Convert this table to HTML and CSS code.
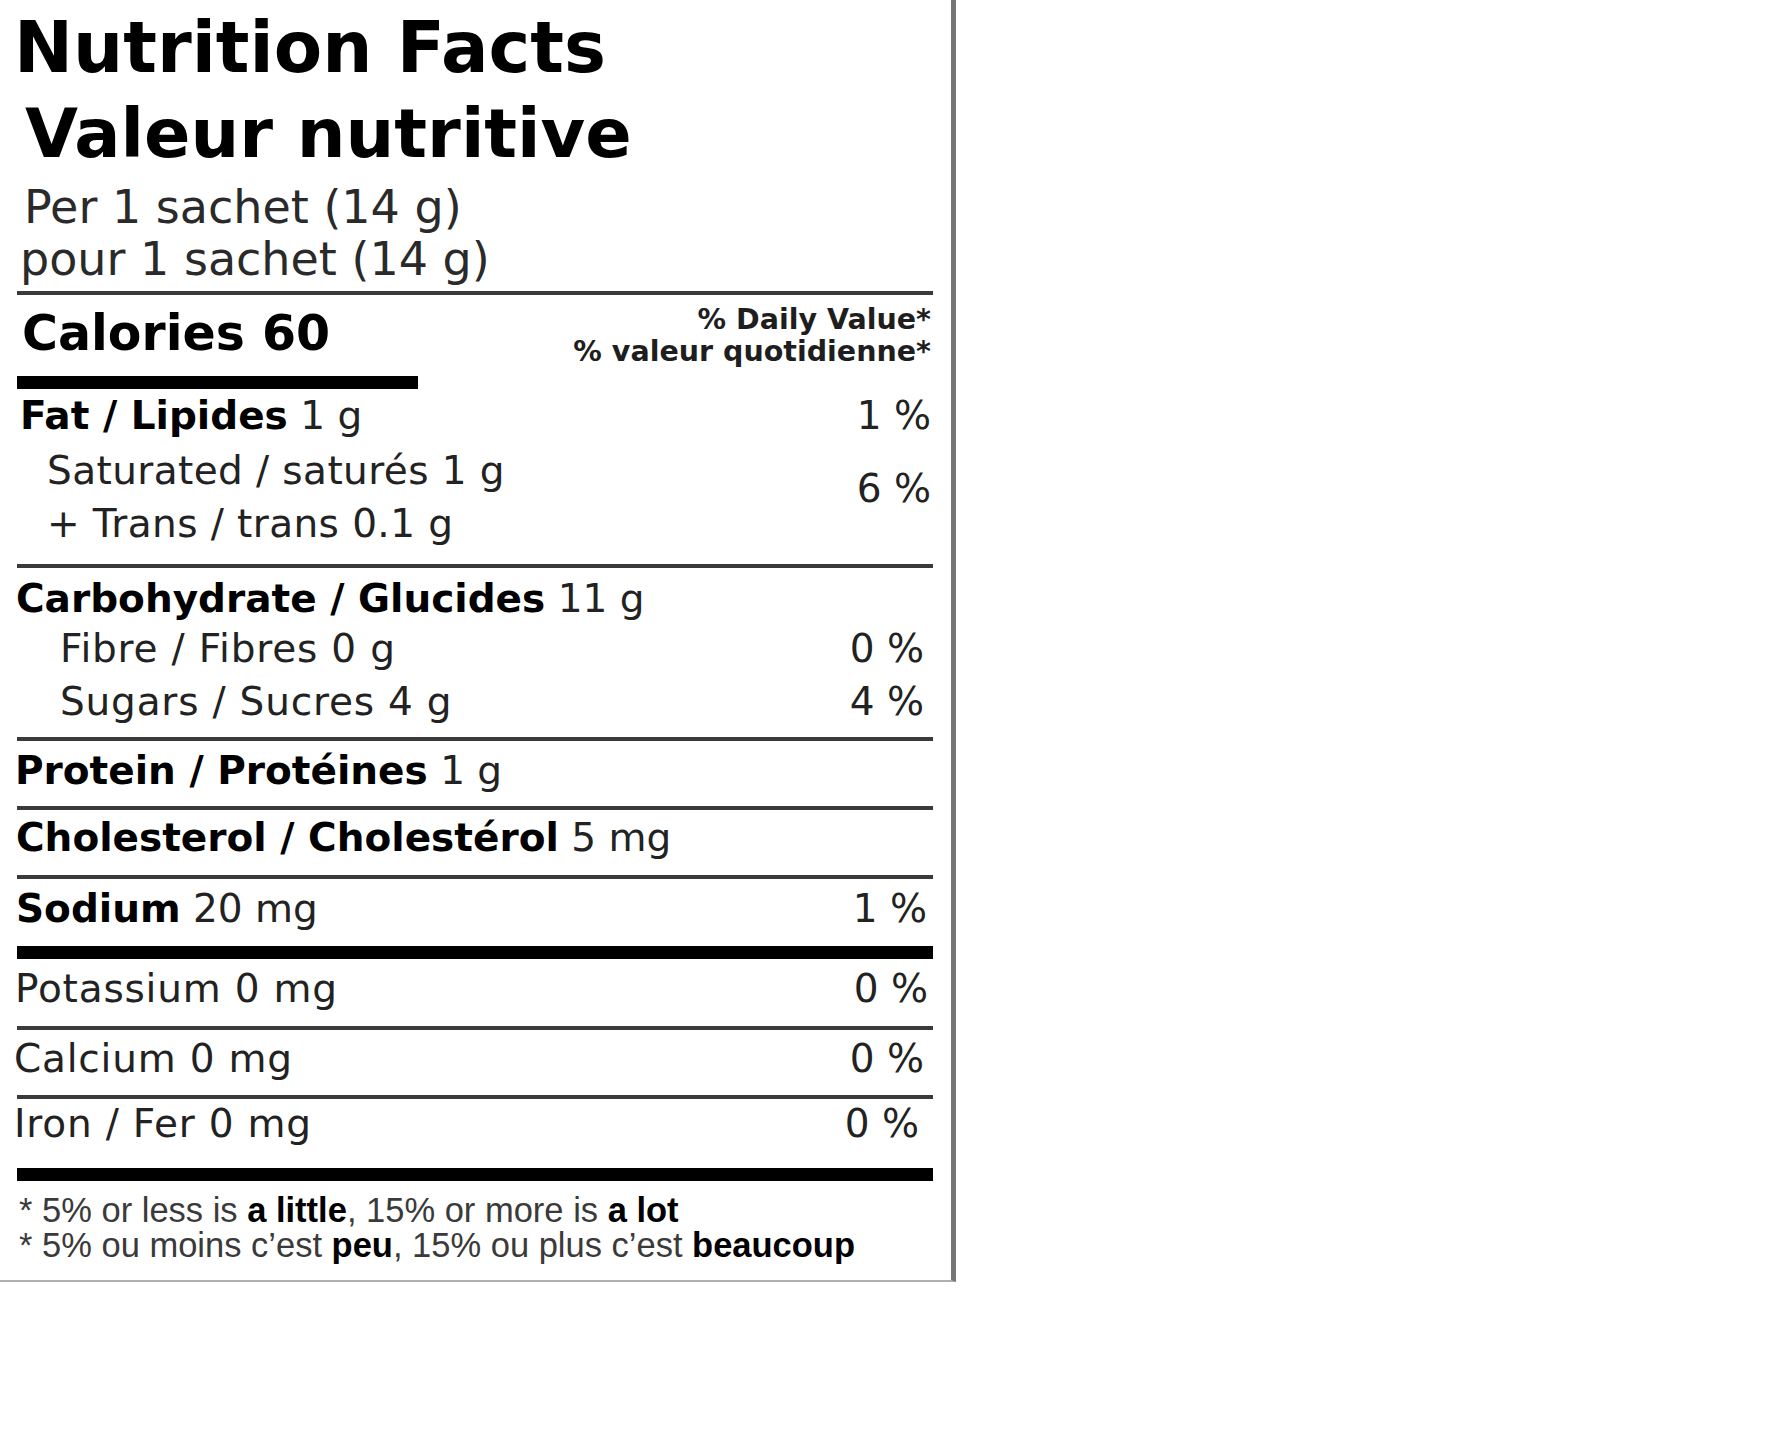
FILE: index.html
```html
<!DOCTYPE html>
<html lang="en">
<head>
<meta charset="utf-8">
<title>Nutrition Facts / Valeur nutritive</title>
<link rel="stylesheet" href="styles.css">
</head>
<body>
<div class="label">
  <div class="title title-en">Nutrition Facts</div>
  <div class="title title-fr">Valeur nutritive</div>
  <div class="serving">
    <div class="serving-en">Per 1 sachet (14 g)</div>
    <div class="serving-fr">pour 1 sachet (14 g)</div>
  </div>
  <div class="rule"></div>
  <div class="cal-row">
    <div class="calories">Calories 60</div>
    <div class="dv-head">
      <div>% Daily Value*</div>
      <div>% valeur quotidienne*</div>
    </div>
  </div>
  <div class="bar bar-short"></div>

  <div class="sec-fat">
    <div class="row"><span class="name name-fat"><b>Fat / Lipides</b> 1 g</span><span class="pct pct-wide">1 %</span></div>
    <div class="group">
      <div class="sub-lines">
        <div class="sub1">Saturated / saturés 1 g</div>
        <div class="sub1">+ Trans / trans 0.1 g</div>
      </div>
      <div class="pct pct-wide pct-group">6 %</div>
    </div>
  </div>
  <div class="rule"></div>

  <div class="sec-carb">
    <div class="row row-carb"><span class="name"><b>Carbohydrate / Glucides</b> 11 g</span></div>
    <div class="sub-lines">
      <div class="row"><span class="name sub2 plain">Fibre / Fibres 0 g</span><span class="pct">0 %</span></div>
      <div class="row"><span class="name sub2 plain">Sugars / Sucres 4 g</span><span class="pct">4 %</span></div>
    </div>
  </div>
  <div class="rule"></div>

  <div class="sec sec-protein">
    <div class="row"><span class="name"><b>Protein / Protéines</b> 1 g</span></div>
  </div>
  <div class="rule"></div>

  <div class="sec sec-chol">
    <div class="row"><span class="name"><b>Cholesterol / Cholestérol</b> 5 mg</span></div>
  </div>
  <div class="rule"></div>

  <div class="sec sec-sodium">
    <div class="row"><span class="name"><b>Sodium</b> 20 mg</span><span class="pct pct-sodium">1 %</span></div>
  </div>
  <div class="bar"></div>

  <div class="sec sec-potassium">
    <div class="row"><span class="name name-k plain">Potassium 0 mg</span><span class="pct pct-k">0 %</span></div>
  </div>
  <div class="rule"></div>

  <div class="sec sec-calcium">
    <div class="row"><span class="name name-ca plain">Calcium 0 mg</span><span class="pct">0 %</span></div>
  </div>
  <div class="rule"></div>

  <div class="sec sec-iron">
    <div class="row"><span class="name name-fe plain">Iron / Fer 0 mg</span><span class="pct pct-fe">0 %</span></div>
  </div>
  <div class="bar"></div>

  <div class="footnote">
    <div>* 5% or less is <b>a little</b>, 15% or more is <b>a lot</b></div>
    <div>* 5% ou moins c’est <b>peu</b>, 15% ou plus c’est <b>beaucoup</b></div>
  </div>
</div>
</body>
</html>
```
FILE: styles.css
```css
html, body {
  margin: 0;
  background: #ffffff;
}

.label {
  box-sizing: border-box;
  width: 956px;
  padding: 6px 18px 17px 17px;
  border-right: 5px solid #777777;
  border-bottom: 2px solid #b0b0b0;
  font-family: "DejaVu Sans", "Liberation Sans", sans-serif;
  color: #111111;
}

/* Title */
.title {
  font-weight: bold;
  line-height: 85px;
  color: #000000;
  white-space: nowrap;
}
.title-en {
  font-size: 70.5px;
  margin-left: -3px;
}
.title-fr {
  font-size: 68.5px;
  margin-left: 8px;
}

/* Serving */
.serving {
  margin-top: 5px;
  padding-bottom: 6px;
  font-size: 46px;
  line-height: 52px;
  color: #2a2a2a;
  white-space: nowrap;
}
.serving-en { margin-left: 7px; }
.serving-fr { margin-left: 3px; }

/* Rules */
.rule {
  height: 4px;
  background: #3a3a3a;
}
.bar {
  height: 13px;
  background: #000000;
}
.bar-short {
  width: 401px;
}

/* Calories */
.cal-row {
  display: flex;
  justify-content: space-between;
  align-items: flex-start;
  padding-bottom: 4px;
}
.calories {
  font-size: 49px;
  font-weight: bold;
  line-height: 77px;
  margin-left: 5px;
  color: #000000;
}
.dv-head {
  padding-top: 9px;
  margin-right: 2px;
  font-size: 28.5px;
  font-weight: bold;
  line-height: 32px;
  text-align: right;
  color: #1e1e1e;
  white-space: nowrap;
}

/* Nutrient rows */
.row {
  display: flex;
  justify-content: space-between;
  align-items: baseline;
  font-size: 39px;
  line-height: 48px;
  color: #222222;
  white-space: nowrap;
}
.row b {
  color: #000000;
}
.plain {
  letter-spacing: 0.8px;
}
.pct {
  padding-right: 9px;
  font-size: 39px;
  color: #222222;
}
.pct-wide { padding-right: 2px; }
.pct-sodium { padding-right: 7px; }
.pct-k { padding-right: 5px; }
.pct-fe { padding-right: 14px; }

.name-fat { margin-left: 3px; }
.name-k { margin-left: -2px; }
.name-ca { margin-left: -3px; }
.name-fe { margin-left: -3px; }

.sec-fat {
  padding-top: 3px;
}
.group {
  display: flex;
  justify-content: space-between;
  align-items: flex-start;
  padding-top: 4px;
  padding-bottom: 14px;
  font-size: 39px;
  color: #222222;
}
.sub-lines {
  line-height: 53px;
}
.sub-lines .row {
  line-height: 53px;
}
.sub1 {
  margin-left: 30px;
  letter-spacing: 0.4px;
  white-space: nowrap;
}
.sub2 {
  margin-left: 43px;
}
.pct-group {
  padding-top: 18px;
  line-height: 53px;
}

.sec-carb {
  padding-top: 8px;
  padding-bottom: 9px;
}
.row-carb {
  line-height: 46px;
  margin-left: -1px;
}

.sec-protein { padding: 6px 0 11px; margin-left: -2px; }
.sec-chol { padding: 4px 0 13px; margin-left: -1px; }
.sec-sodium { padding: 6px 0 13px; margin-left: -1px; }
.sec-sodium .pct { margin-right: -1px; }
.sec-potassium { padding: 6px 0 13px; }
.sec-calcium { padding: 5px 0 12px; }
.sec-iron { padding: 1px 0 20px; }

/* Footnote */
.footnote {
  padding-top: 12px;
  margin-left: 2px;
  font-family: "Liberation Sans", Arial, sans-serif;
  font-size: 34.5px;
  line-height: 35px;
  color: #3a3a3a;
  white-space: nowrap;
}
.footnote b {
  color: #000000;
}
```
